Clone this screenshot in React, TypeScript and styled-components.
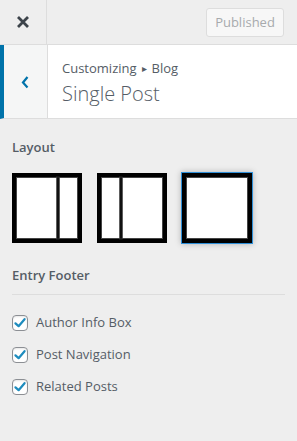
import React from "react";
import styled, { createGlobalStyle } from "styled-components";

const GlobalStyle = createGlobalStyle`
  html, body {
    margin: 0;
    padding: 0;
    background: #eee;
  }
  body {
    font-family: "Open Sans", "Noto Sans", sans-serif;
    color: #555d66;
  }
`;

const Panel = styled.div`
  width: 297px;
  height: 441px;
  background: #eee;
  overflow: hidden;
`;

const Header = styled.header`
  display: flex;
  align-items: center;
  height: 44px;
  border-bottom: 1px solid #ddd;
  background: #eee;
`;

const CloseButton = styled.button`
  width: 47px;
  height: 44px;
  display: flex;
  align-items: center;
  justify-content: center;
  border: 0;
  border-right: 1px solid #ddd;
  background: transparent;
  padding: 0;
  color: #23282d;
`;

const HeaderActions = styled.div`
  flex: 1;
  display: flex;
  justify-content: flex-end;
  padding-right: 13px;
`;

const PublishButton = styled.button`
  height: 29px;
  width: 78px;
  border: 1px solid #ddd;
  border-radius: 3px;
  background: #f7f7f7;
  color: #a7aaad;
  font-family: inherit;
  font-size: 13px;
  padding: 0;
`;

const SectionHead = styled.div`
  display: flex;
  height: 73px;
  background: #fff;
  border-bottom: 1px solid #ddd;
  border-left: 4px solid #0073aa;
`;

const BackButton = styled.button`
  width: 44px;
  border: 0;
  border-right: 1px solid #ddd;
  background: #f5f6f6;
  display: flex;
  align-items: center;
  justify-content: center;
  padding: 0 2px 0 0;
  color: #0073aa;
`;

const Titles = styled.div`
  display: flex;
  flex-direction: column;
  padding: 14px 0 0 14px;
`;

const Crumb = styled.span`
  font-size: 13px;
  line-height: 18px;
  color: #555d66;
`;

const Arrow = styled.span`
  font-size: 10px;
  margin: 0 5px 0 5px;
  position: relative;
  top: -1px;
`;

const Title = styled.h1`
  margin: 3px 0 0;
  font-size: 20px;
  font-weight: 300;
  line-height: 26px;
  color: #555d66;
`;

const Body = styled.div`
  padding: 19px 12px 0;
`;

const Label = styled.h3`
  margin: 0;
  font-size: 13px;
  font-weight: 600;
  line-height: 18px;
  color: #555d66;
`;

const Layouts = styled.div`
  display: flex;
  gap: 15px;
  margin: 17px 0 23px;
`;

const LayoutOption = styled.div<{ $active?: boolean }>`
  width: 70px;
  height: 70px;
  box-sizing: border-box;
  display: flex;
  outline: ${(p) => (p.$active ? "1px solid #2e8fd8" : "none")};
  box-shadow: ${(p) => (p.$active ? "0 0 6px 1px rgba(0,0,0,0.25)" : "none")};
  svg {
    display: block;
  }
`;

const Divider = styled.hr`
  border: 0;
  border-top: 1px solid #ddd;
  margin: 10px 0 18px;
`;

const Options = styled.div`
  display: flex;
  flex-direction: column;
  gap: 13px;
`;

const Option = styled.label`
  display: flex;
  align-items: center;
  gap: 8px;
  font-size: 13px;
  line-height: 19px;
  color: #555d66;
`;

const Box = styled.span`
  width: 16px;
  height: 16px;
  box-sizing: border-box;
  border: 1px solid #8c8f94;
  border-radius: 4px;
  background: #fff;
  display: flex;
  align-items: center;
  justify-content: center;
  box-shadow: inset 0 1px 2px rgba(0, 0, 0, 0.1);
`;

const LayoutIcon = ({ split }: { split?: number }) => (
  <svg width="70" height="70" viewBox="0 0 70 70">
    <rect x="2" y="2" width="66" height="66" fill="#fff" stroke="#000" strokeWidth="4" />
    <rect x="4.5" y="4.5" width="61" height="61" fill="none" stroke="#444" strokeWidth="1" />
    {split !== undefined && (
      <rect x={split - 1.5} y="4" width="3" height="62" fill="#111" stroke="#444" strokeWidth="0.6" />
    )}
  </svg>
);

const Check = ({ label }: { label: string }) => (
  <Option>
    <Box>
      <svg width="14" height="14" viewBox="0 0 20 20">
        <path d="M3.5 10.5l4.5 4 8.5-10" fill="none" stroke="#1e8cbe" strokeWidth="3.2" strokeLinecap="round" strokeLinejoin="round" />
      </svg>
    </Box>
    {label}
  </Option>
);

export default function App() {
  return (
    <Panel>
      <GlobalStyle />
      <Header>
        <CloseButton aria-label="Close">
          <svg width="14" height="14" viewBox="0 0 14 14">
            <path d="M2 2l10 10M12 2L2 12" stroke="#3c434a" strokeWidth="2.8" />
          </svg>
        </CloseButton>
        <HeaderActions>
          <PublishButton disabled>Published</PublishButton>
        </HeaderActions>
      </Header>
      <SectionHead>
        <BackButton aria-label="Back">
          <svg width="10" height="14" viewBox="0 0 10 14">
            <path d="M7.5 2L3 7.5l4.5 5" fill="none" stroke="#0073aa" strokeWidth="2.2" />
          </svg>
        </BackButton>
        <Titles>
          <Crumb>
            Customizing<Arrow>▸</Arrow>Blog
          </Crumb>
          <Title>Single Post</Title>
        </Titles>
      </SectionHead>
      <Body>
        <Label>Layout</Label>
        <Layouts>
          <LayoutOption>
            <LayoutIcon split={46} />
          </LayoutOption>
          <LayoutOption>
            <LayoutIcon split={24} />
          </LayoutOption>
          <LayoutOption $active>
            <LayoutIcon />
          </LayoutOption>
        </Layouts>
        <Label>Entry Footer</Label>
        <Divider />
        <Options>
          <Check label="Author Info Box" />
          <Check label="Post Navigation" />
          <Check label="Related Posts" />
        </Options>
      </Body>
    </Panel>
  );
}
